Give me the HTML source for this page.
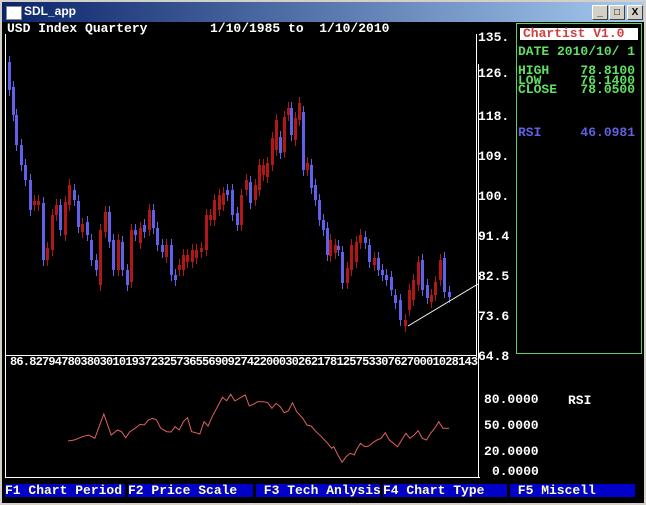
<!DOCTYPE html>
<html><head><meta charset="utf-8"><style>
body{margin:0;width:646px;height:505px;overflow:hidden;background:#d4d0c8;font-family:"Liberation Mono",monospace;}
.win{position:absolute;left:0;top:0;width:646px;height:505px;background:#d4d0c8;}
.tb{position:absolute;left:2px;top:2px;width:642px;height:20px;background:linear-gradient(90deg,#0a246a,#a6caf0);}
.tb span{position:absolute;left:22px;top:2px;color:#fff;font:bold 12px "Liberation Sans",sans-serif;}
.ic{position:absolute;left:4px;top:4px;width:14px;height:12px;background:#fff;border:1px solid #888;}
.bt{position:absolute;top:3px;width:14px;height:13px;background:#d4d0c8;border:1px solid;border-color:#fff #404040 #404040 #fff;font:bold 10px "Liberation Sans",sans-serif;text-align:center;line-height:13px;color:#000}
.main{position:absolute;left:2px;top:22px;width:642px;height:481px;background:#000;}
.t{position:absolute;color:#fff;font-size:13px;font-weight:bold;white-space:pre;line-height:12px}
.fb{position:absolute;top:462px;height:13px;background:#0000c8;color:#ffffc0;font-size:13px;font-weight:bold;line-height:13px;white-space:pre;overflow:hidden}
</style></head><body>
<div class="win">
<div class="tb"><div class="ic"></div><span>SDL_app</span>
<div class="bt" style="left:590px">_</div><div class="bt" style="left:607px">□</div><div class="bt" style="left:625px">X</div></div>
<div class="main">
<div class="t" style="left:5px;top:1px">USD Index Quartery</div>
<div class="t" style="left:208px;top:1px">1/10/1985 to  1/10/2010</div>
<svg width="642" height="481" style="position:absolute;left:0;top:0" id="sv">
<line x1="3.5" y1="12" x2="3.5" y2="333" stroke="#fff"/>
<line x1="3" y1="333.5" x2="475" y2="333.5" stroke="#fff"/>
<line x1="474.5" y1="12" x2="474.5" y2="335" stroke="#fff"/>
<line x1="3.5" y1="42" x2="3.5" y2="455" stroke="#fff"/>
<line x1="3" y1="455.5" x2="478" y2="455.5" stroke="#fff"/>
<line x1="476.5" y1="42" x2="476.5" y2="456" stroke="#fff"/>
<g id="cd"></g>
<polyline id="rsi" fill="none" stroke="#e06060" stroke-width="1"/>
<line x1="406" y1="304" x2="476" y2="262" stroke="#fff"/>
<rect x="514.5" y="1.5" width="125" height="330" fill="none" stroke="#60d060"/>
<rect x="518" y="6" width="118" height="12" fill="#fff"/>
</svg>
<div class="t" style="left:476px;top:10px">135.</div>
<div class="t" style="left:476px;top:46px">126.</div>
<div class="t" style="left:476px;top:89px">118.</div>
<div class="t" style="left:476px;top:129px">109.</div>
<div class="t" style="left:476px;top:169px">100.</div>
<div class="t" style="left:476px;top:209px">91.4</div>
<div class="t" style="left:476px;top:249px">82.5</div>
<div class="t" style="left:476px;top:289px">73.6</div>
<div class="t" style="left:476px;top:329px">64.8</div>
<div class="t" style="left:8px;top:334px;font-size:12px;letter-spacing:-0.8px">86.8279478038030101937232573655690927422000302621781257533076270001028143</div>
<div class="t" style="left:482px;top:372px">80.0000</div>
<div class="t" style="left:482px;top:398px">50.0000</div>
<div class="t" style="left:482px;top:424px">20.0000</div>
<div class="t" style="left:490px;top:444px">0.0000</div>
<div class="t" style="left:566px;top:373px">RSI</div>
<div class="t" style="left:521px;top:6px;color:#d04040">Chartist V1.0</div>
<div class="t" style="left:516px;top:24px;color:#60e060">DATE 2010/10/ 1</div>
<div class="t" style="left:516px;top:44px;color:#60e060;line-height:9.5px">HIGH    78.8100
LOW     76.1400
CLOSE   78.0500</div>
<div class="t" style="left:516px;top:105px;color:#6060e0">RSI     46.0981</div>
<div class="fb" style="left:3px;width:120px">F1 Chart Period</div>
<div class="fb" style="left:126px;width:125px">F2 Price Scale</div>
<div class="fb" style="left:254px;width:124px"> F3 Tech Anlysis</div>
<div class="fb" style="left:381px;width:124px">F4 Chart Type</div>
<div class="fb" style="left:508px;width:125px"> F5 Miscell</div>
</div></div>
<script>
var d=[[8,62,90,'b'],[12,87,115,'b'],[15,115,145,'b'],[20,145,165,'b'],[24,165,180,'b'],[29,180,210,'b'],[33,201,205,'r'],[37,201,205,'r'],[42,203,260,'b'],[46,248,260,'r'],[51,215,250,'r'],[55,205,215,'r'],[59,205,230,'b'],[64,202,235,'r'],[68,185,205,'r'],[73,190,200,'b'],[77,201,227,'b'],[81,224,232,'r'],[86,222,235,'b'],[90,240,260,'b'],[95,260,270,'b'],[99,230,285,'r'],[104,212,232,'r'],[108,212,242,'b'],[112,240,270,'b'],[117,240,270,'r'],[121,242,270,'b'],[126,270,285,'b'],[130,230,282,'r'],[134,230,235,'b'],[139,228,243,'r'],[143,225,232,'b'],[148,210,230,'r'],[152,210,228,'b'],[156,228,245,'b'],[161,245,252,'b'],[165,245,257,'r'],[170,245,275,'b'],[174,275,280,'b'],[178,265,270,'r'],[182,255,270,'r'],[186,255,262,'r'],[191,250,262,'r'],[195,250,258,'r'],[200,248,252,'r'],[205,215,250,'r'],[209,215,220,'r'],[213,200,220,'r'],[218,195,210,'r'],[222,193,205,'r'],[226,190,195,'b'],[231,190,215,'b'],[236,213,225,'b'],[240,195,225,'r'],[245,180,190,'r'],[249,182,203,'b'],[254,185,200,'r'],[258,165,190,'r'],[262,165,175,'r'],[266,163,177,'r'],[271,138,165,'r'],[275,120,150,'r'],[279,137,153,'b'],[283,117,152,'r'],[287,108,115,'r'],[290,108,135,'b'],[294,118,140,'r'],[298,103,120,'r'],[302,112,170,'b'],[306,163,170,'r'],[310,165,188,'b'],[314,185,200,'b'],[318,200,220,'b'],[322,220,230,'b'],[326,228,255,'b'],[329,240,256,'r'],[334,245,253,'r'],[337,246,250,'b'],[341,252,283,'b'],[346,268,283,'r'],[350,245,270,'r'],[355,242,262,'r'],[359,235,243,'r'],[364,237,243,'b'],[368,245,262,'b'],[373,258,265,'r'],[377,258,270,'b'],[381,270,275,'b'],[385,275,280,'b'],[390,277,290,'b'],[394,295,303,'b'],[399,300,320,'b'],[404,320,326,'r'],[408,290,310,'r'],[412,280,300,'r'],[417,262,285,'r'],[421,260,290,'b'],[426,285,298,'b'],[430,295,302,'r'],[434,282,295,'r'],[439,260,280,'r'],[443,258,292,'b'],[448,292,297,'b']];
var s='';d.forEach(function(c){var x=c[0]-2,t=c[1]-22,b=c[2]-22,col=c[3]=='b'?'#6060e8':'#b01818';
s+='<line x1="'+(x+1.5)+'" y1="'+(t-6)+'" x2="'+(x+1.5)+'" y2="'+(b+6)+'" stroke="'+col+'"/><rect x="'+x+'" y="'+t+'" width="3" height="'+Math.max(2,b-t)+'" fill="'+col+'"/>';});
document.getElementById('cd').innerHTML=s;
var r=[[165,303],[180,300],[200,290],[215,285],[230,295],[252,222],[270,285],[285,270],[295,275],[305,293],[315,275],[330,263],[340,253],[350,255],[360,240],[370,235],[380,240],[390,265],[405,275],[415,276],[425,260],[435,270],[445,245],[455,233],[465,275],[475,278],[485,282],[495,245],[505,258],[515,230],[530,195],[540,172],[550,182],[560,163],[570,183],[585,172],[595,165],[605,198],[615,193],[625,185],[640,185],[650,188],[660,205],[670,190],[680,200],[690,218],[700,212],[710,188],[720,215],[735,235],[745,255],[755,258],[765,272],[780,290],[795,310],[805,325],[810,320],[820,345],[830,367],[840,350],[850,340],[860,345],[865,330],[875,310],[885,320],[895,318],[905,308],[915,300],[925,295],[935,278],[945,300],[955,310],[965,320],[975,300],[985,280],[995,295],[1005,285],[1015,272],[1025,295],[1035,300],[1045,280],[1055,265],[1065,245],[1075,265],[1090,265]];
document.getElementById('rsi').setAttribute('points',r.map(function(p){return (p[0]/2.427-2).toFixed(1)+','+(p[1]/3+340-22).toFixed(1)}).join(' '));
</script>
</body></html>
